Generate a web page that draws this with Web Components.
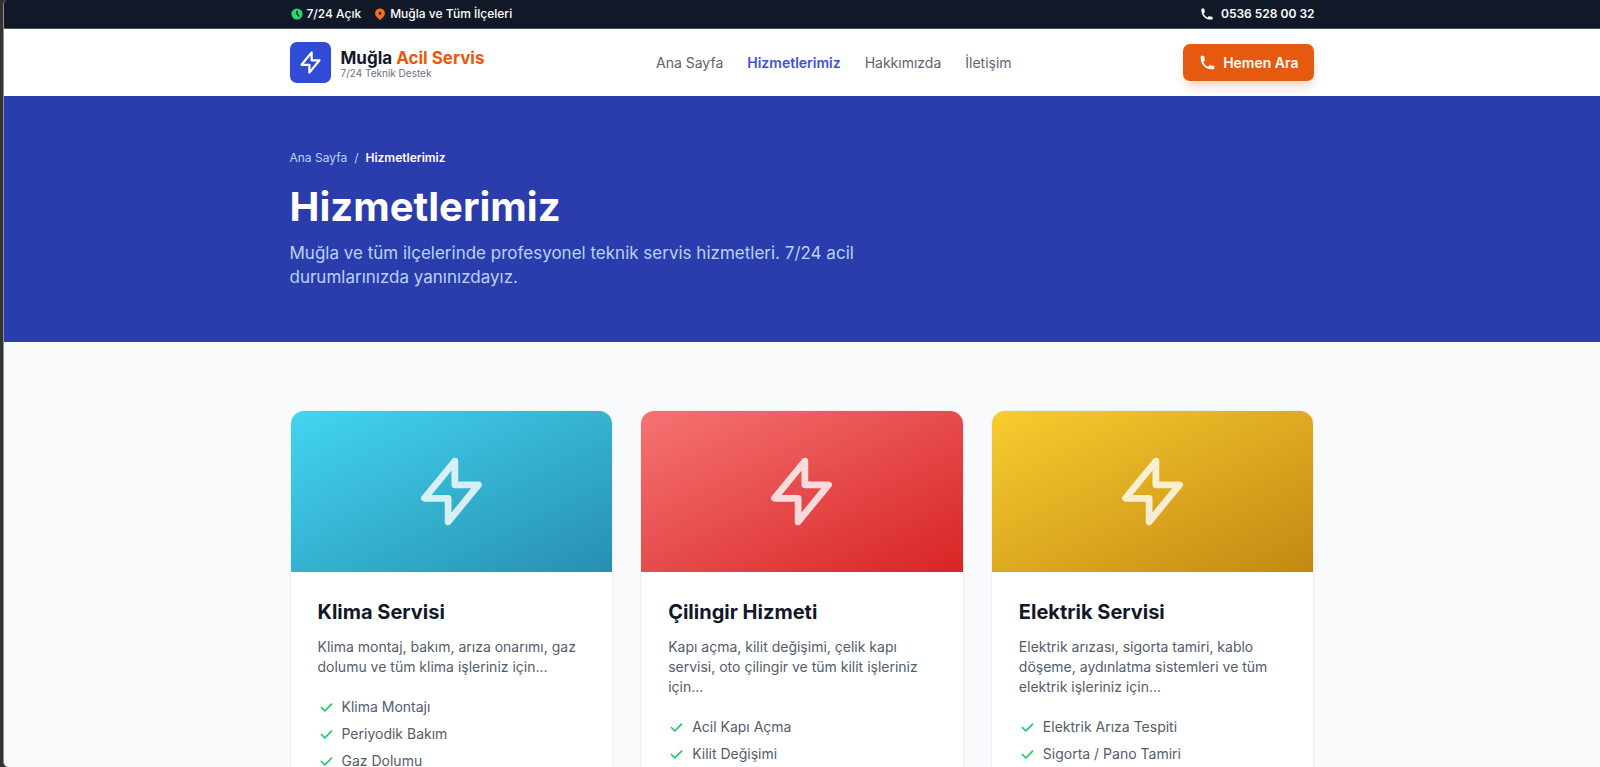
<!DOCTYPE html>
<html lang="tr">
<head>
<meta charset="utf-8">
<meta name="viewport" content="width=device-width, initial-scale=1">
<title>Hizmetlerimiz - Muğla Acil Servis</title>
<style>
  body {
    margin:0;
    background:#333333;
    font-family:Inter, "Liberation Sans", sans-serif;
    color:#111827;
    --wrap:1025px;
  }
</style>
</head>
<body>

<page-shell>
  <top-bar></top-bar>
  <site-header active-link="hizmetler"></site-header>
  <page-hero heading="Hizmetlerimiz">
    Muğla ve tüm ilçelerinde profesyonel teknik servis hizmetleri. 7/24 acil durumlarınızda yanınızdayız.
  </page-hero>
  <service-grid>
    <service-card tone="cyan" heading="Klima Servisi" items="Klima Montajı|Periyodik Bakım|Gaz Dolumu">
      Klima montaj, bakım, arıza onarımı, gaz dolumu ve tüm klima işleriniz için...
    </service-card>
    <service-card tone="red" heading="Çilingir Hizmeti" items="Acil Kapı Açma|Kilit Değişimi">
      Kapı açma, kilit değişimi, çelik kapı servisi, oto çilingir ve tüm kilit işleriniz için...
    </service-card>
    <service-card tone="yellow" heading="Elektrik Servisi" items="Elektrik Arıza Tespiti|Sigorta / Pano Tamiri">
      Elektrik arızası, sigorta tamiri, kablo döşeme, aydınlatma sistemleri ve tüm elektrik işleriniz için...
    </service-card>
  </service-grid>
</page-shell>

<script>
// Shared icon paths. Solid ones use a 20 grid, outlined ones a 24 grid.
const ICONS = {
  clock: { solid: true, d: 'M10 18a8 8 0 100-16 8 8 0 000 16zm1-12a1 1 0 10-2 0v4a1 1 0 00.293.707l2.828 2.829a1 1 0 101.415-1.415L11 9.586V6z' },
  pin:   { solid: true, d: 'M5.05 4.05a7 7 0 119.9 9.9L10 18.9l-4.95-4.95a7 7 0 010-9.9zM10 11a2 2 0 100-4 2 2 0 000 4z' },
  phone: { solid: true, d: 'M2 3a1 1 0 011-1h2.153a1 1 0 01.986.836l.74 4.435a1 1 0 01-.54 1.06l-1.548.773a11.037 11.037 0 006.105 6.105l.774-1.548a1 1 0 011.059-.54l4.435.74a1 1 0 01.836.986V17a1 1 0 01-1 1h-2C7.82 18 2 12.18 2 5V3z' },
  check: { solid: true, d: 'M16.707 5.293a1 1 0 010 1.414l-8 8a1 1 0 01-1.414 0l-4-4a1 1 0 011.414-1.414L8 12.586l7.293-7.293a1 1 0 011.414 0z' },
  bolt:  { d: 'M13 10V3L4 14h7v7l9-11h-7z' }
};

const icon = (name, size) => {
  const { solid, d } = ICONS[name];
  return solid
    ? `<svg width="${size}" height="${size}" viewBox="0 0 20 20" fill="currentColor" aria-hidden="true"><path fill-rule="evenodd" clip-rule="evenodd" d="${d}"/></svg>`
    : `<svg width="${size}" height="${size}" viewBox="0 0 24 24" fill="none" stroke="currentColor" stroke-width="2" stroke-linecap="round" stroke-linejoin="round" aria-hidden="true"><path d="${d}"/></svg>`;
};

// Centred column used by every band of the page
const BASE = `
  * { box-sizing:border-box; margin:0; }
  a { color:inherit; text-decoration:none; }
  svg { display:block; flex:none; }
  .wrap {
    max-width:var(--wrap);
    margin:0 auto;
  }
`;

// Scrolling page pane with the dark window edge on its left
class PageShell extends HTMLElement {
  connectedCallback() {
    this.attachShadow({ mode: 'open' });
    this.shadowRoot.innerHTML = `
      <style>
        :host { display:block; padding-left:3px; }
        .pane {
          height:100vh;
          overflow-y:auto;
          scrollbar-width:none;
          background:#f9fafb;
          border-left:1px solid #8b8f96;
          border-radius:5px 0 0 5px;
          box-sizing:border-box;
        }
      </style>
      <div class="pane"><slot></slot></div>
    `;
  }
}

class TopBar extends HTMLElement {
  connectedCallback() {
    this.attachShadow({ mode: 'open' });
    this.shadowRoot.innerHTML = `
      <style>
        ${BASE}
        :host {
          display:block;
          background:#111827;
          border-bottom:1px solid #4b5563;
          color:#ffffff;
          font-size:12px;
          line-height:16px;
          font-weight:500;
        }
        .wrap {
          display:flex;
          justify-content:space-between;
          align-items:center;
          padding:6px 0;
        }
        .info { display:flex; gap:12px; }
        .item { display:flex; align-items:center; gap:3px; }
        .open svg { color:#26d870; }
        .area svg { color:#f37021; }
        .tel { display:flex; align-items:center; gap:7px; font-weight:600; }
      </style>
      <div class="wrap">
        <div class="info">
          <span class="item open">${icon('clock', 14)}7/24 Açık</span>
          <span class="item area">${icon('pin', 14)}Muğla ve Tüm İlçeleri</span>
        </div>
        <a class="tel" href="tel:05365280032">${icon('phone', 14)}0536 528 00 32</a>
      </div>
    `;
  }
}

class SiteHeader extends HTMLElement {
  connectedCallback() {
    this.attachShadow({ mode: 'open' });
    this.shadowRoot.innerHTML = `
      <style>
        ${BASE}
        :host { display:block; background:#ffffff; }
        .wrap {
          display:flex;
          justify-content:space-between;
          align-items:center;
          padding:13px 0;
        }
        .logo { display:flex; align-items:center; gap:10px; }
        .mark {
          display:grid;
          place-items:center;
          width:41px;
          height:41px;
          border-radius:7px;
          background:#304bd6;
          color:#ffffff;
        }
        .name { font-size:17px; line-height:20px; font-weight:700; }
        .name span { color:#e8590c; }
        .sub { font-size:10px; line-height:10px; color:#6b7280; }

        nav { display:flex; gap:24px; font-size:14px; line-height:20px; color:#5b6472; }
        nav a.active { font-weight:600; color:#3d53da; }

        .call {
          display:flex;
          align-items:center;
          gap:7px;
          padding:8px 16px;
          border-radius:7px;
          background:#e65a10;
          color:#ffffff;
          font-size:14px;
          line-height:21px;
          font-weight:600;
          box-shadow:0 8px 12px -3px rgba(230,90,16,0.28);
        }
      </style>
      <header class="wrap">
        <a class="logo" href="/">
          <span class="mark">${icon('bolt', 27)}</span>
          <div>
            <div class="name">Muğla <span>Acil Servis</span></div>
            <div class="sub">7/24 Teknik Destek</div>
          </div>
        </a>
        <nav>
          <a href="/" data-link="home">Ana Sayfa</a>
          <a href="/hizmetler" data-link="hizmetler">Hizmetlerimiz</a>
          <a href="/hakkimizda" data-link="hakkimizda">Hakkımızda</a>
          <a href="/iletisim" data-link="iletisim">İletişim</a>
        </nav>
        <a class="call" href="tel:05365280032">${icon('phone', 17)}Hemen Ara</a>
      </header>
    `;

    // Highlight the current page
    const active = this.getAttribute('active-link');
    this.shadowRoot.querySelectorAll('nav a').forEach(link => {
      if (link.dataset.link === active) link.classList.add('active');
    });
  }
}

class PageHero extends HTMLElement {
  connectedCallback() {
    const heading = this.getAttribute('heading');
    this.attachShadow({ mode: 'open' });
    this.shadowRoot.innerHTML = `
      <style>
        ${BASE}
        :host {
          display:block;
          padding:54px 0 53px;
          background:#2b3cad;
          color:#ffffff;
        }
        .crumbs {
          display:flex;
          gap:7px;
          margin-bottom:16px;
          font-size:12px;
          line-height:16px;
          color:#b9d3f8;
        }
        .crumbs .here { color:#ffffff; font-weight:600; }
        h1 { font-size:40px; line-height:50px; font-weight:700; margin-bottom:9px; }
        p { max-width:568px; font-size:17px; line-height:24px; color:#b9d3f8; }
      </style>
      <div class="wrap">
        <div class="crumbs">
          <a href="/">Ana Sayfa</a><span>/</span><span class="here">${heading}</span>
        </div>
        <h1>${heading}</h1>
        <p><slot></slot></p>
      </div>
    `;
  }
}

class ServiceGrid extends HTMLElement {
  connectedCallback() {
    this.attachShadow({ mode: 'open' });
    this.shadowRoot.innerHTML = `
      <style>
        ${BASE}
        :host { display:block; padding:68px 0; }
        .wrap {
          display:grid;
          grid-template-columns:repeat(3, 1fr);
          gap:27px;
        }
      </style>
      <div class="wrap"><slot></slot></div>
    `;
  }
}

class ServiceCard extends HTMLElement {
  connectedCallback() {
    const items = this.getAttribute('items').split('|');
    this.attachShadow({ mode: 'open' });
    this.shadowRoot.innerHTML = `
      <style>
        ${BASE}
        :host {
          display:block;
          overflow:hidden;
          background:#ffffff;
          border:1px solid #eef0f3;
          border-radius:14px;
          box-shadow:0 1px 2px rgba(0,0,0,0.06);
        }
        .cover {
          display:grid;
          place-items:center;
          height:161px;
          color:#ffffff;
          background:linear-gradient(to bottom right, var(--from), var(--to));
        }
        .cover svg { opacity:0.8; }
        :host([tone="cyan"])   { --from:#43d5f0; --to:#278fb1; }
        :host([tone="red"])    { --from:#f57373; --to:#d82424; }
        :host([tone="yellow"]) { --from:#f7cd2e; --to:#c48813; }

        .body { padding:27px; }
        h2 { font-size:20px; line-height:27px; font-weight:700; margin-bottom:11px; }
        p { font-size:14px; line-height:20px; color:#535d6a; margin-bottom:20px; }
        ul {
          display:grid;
          gap:7px;
          padding:0;
          list-style:none;
          font-size:14px;
          line-height:20px;
          color:#535d6a;
        }
        li { display:flex; align-items:center; gap:7px; }
        li svg { color:#1fcb67; }
      </style>
      <div class="cover">${icon('bolt', 81)}</div>
      <div class="body">
        <h2>${this.getAttribute('heading')}</h2>
        <p><slot></slot></p>
        <ul>
          ${items.map(text => `<li>${icon('check', 17)}${text}</li>`).join('')}
        </ul>
      </div>
    `;
  }
}

customElements.define('page-shell', PageShell);
customElements.define('top-bar', TopBar);
customElements.define('site-header', SiteHeader);
customElements.define('page-hero', PageHero);
customElements.define('service-grid', ServiceGrid);
customElements.define('service-card', ServiceCard);
</script>
</body>
</html>
